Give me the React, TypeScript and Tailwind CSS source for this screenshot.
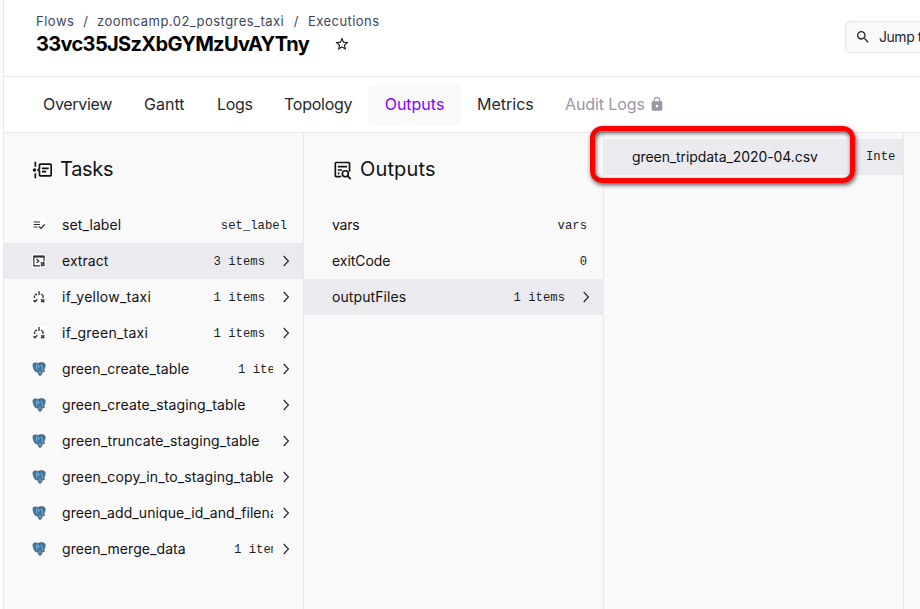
import React from "react";
import { MdLock, MdStarOutline, MdSearch } from "react-icons/md";

function TimelineIcon() {
  return (
    <svg viewBox="0 0 24 24" className="size-5 shrink-0" fill="currentColor">
      <path d="M5 2V8H3V2H5M3 22H5V16H3V22M5 12C5 13.11 4.11 14 3 14S1 13.11 1 12 1.9 10 3 10 5 10.9 5 12M24 6V18C24 19.11 23.11 20 22 20H10C8.9 20 8 19.11 8 18V14L6 12L8 10V6C8 4.89 8.9 4 10 4H22C23.11 4 24 4.89 24 6M22 6H10V10.83L8.83 12L10 13.17V18H22V6M12 9H20V11H12V9M12 13H17V15H12V13Z" />
    </svg>
  );
}

function TextSearchIcon() {
  return (
    <svg viewBox="0 0 24 24" className="size-5 shrink-0" fill="none" stroke="currentColor" strokeWidth="2">
      <path d="M11 20H5a1 1 0 0 1-1-1V4a1 1 0 0 1 1-1h15a1 1 0 0 1 1 1v10M7 8h11M7 12h5M7 16h2" />
      <circle cx="16" cy="16.5" r="3.6" />
      <path d="M18.5 19l4 4" />
    </svg>
  );
}

function Chevron() {
  return (
    <svg viewBox="0 0 14 14" className="size-3.5 shrink-0" fill="none" stroke="#26282d" strokeWidth="1.2">
      <path d="M4.700 2l4.700 5-4.700 5" />
    </svg>
  );
}

type Kind = "label" | "script" | "branch" | "postgres";

function TaskIcon({ kind }: { kind: Kind }) {
  return (
    <svg viewBox="0 0 14 14" className="size-3.5 shrink-0 bg-white" fill="none" stroke="#2b2c37" strokeWidth="1.2">
      {kind === "label" && (
        <path d="M1.500 4h6.500M1.500 6.500h6.500M1.500 9h4M7 8.500l2 2 3.700-4" />
      )}
      {kind === "script" && (
        <>
          <path d="M8 11.900H1.800V2.200H12V7" />
          <path d="M1.500 2.700H12.300" strokeWidth="1.800" />
          <path d="M4.500 5l2.300 2-2.300 2" />
          <path d="M8.700 9h4M8.700 11.200h4M9.800 8v4.600M11.800 7.500v4.500" />
        </>
      )}
      {kind === "branch" && (
        <>
          <path d="M7 1v4M2.500 8V5.600M3 4.500h2M9 4.500h1.500M11 5v3" strokeWidth="1.3" />
          <path d="M1.500 10.300l1.400 1.500 2.400-2.500M9.200 9.200l3.100 3.100M12.300 9.200L9.200 12.300" strokeWidth="1.400" />
        </>
      )}
      {kind === "postgres" && (
        <>
          <path
            d="M.8 3Q1 .6 3.500 .8L5.500 1.300 9 .6Q13.300 .3 13.300 3.500Q13 6.500 11.600 8.400L13 9Q12 10 10.200 10Q10 13.400 8 13.400Q6 13.400 5.900 10L3.500 9.800Q1 7 .8 3Z"
            fill="#3a76a3"
            stroke="#5a6670"
            strokeWidth=".7"
          />
          <path d="M5 2.200Q4.200 5 5 8.200M8.900 2.500Q11 5 10.300 8.800" stroke="#a9c3d6" strokeWidth=".7" />
          <path d="M5.500 3.800h1.400v2M8 8.500v3.500" stroke="#d5e2ec" strokeWidth=".6" />
        </>
      )}
    </svg>
  );
}

type Row = { name: string; value?: string; kind?: Kind; active?: boolean; arrow?: boolean; track: string; valueClass?: string };

const tasks: Row[] = [
  { name: "set_label", value: "set_label", kind: "label", track: "tracking-[0.1px]" },
  { name: "extract", value: "3 items", kind: "script", active: true, arrow: true, track: "tracking-[0.05px]" },
  { name: "if_yellow_taxi", value: "1 items", kind: "branch", arrow: true, track: "tracking-[0.24px]" },
  { name: "if_green_taxi", value: "1 items", kind: "branch", arrow: true, track: "tracking-[0.24px]" },
  { name: "green_create_table", value: "1 items", kind: "postgres", arrow: true, track: "tracking-[0.1px]", valueClass: "w-[35px]" },
  { name: "green_create_staging_table", kind: "postgres", arrow: true, track: "tracking-[0.11px]" },
  { name: "green_truncate_staging_table", kind: "postgres", arrow: true, track: "tracking-[0.14px]" },
  { name: "green_copy_in_to_staging_table", kind: "postgres", arrow: true, track: "tracking-[0.12px]" },
  { name: "green_add_unique_id_and_filename", kind: "postgres", arrow: true, track: "tracking-[0.08px]" },
  { name: "green_merge_data", value: "1 items", kind: "postgres", arrow: true, track: "tracking-[0.07px]", valueClass: "w-[39px]" },
];

const outputs: Row[] = [
  { name: "vars", value: "vars", track: "tracking-[-0.2px]" },
  { name: "exitCode", value: "0", track: "tracking-[-0.05px]" },
  { name: "outputFiles", value: "1 items", active: true, arrow: true, track: "tracking-[0.08px]" },
];

function ListRow({ row }: { row: Row }) {
  return (
    <div className={`flex h-9 items-center pl-7 ${row.arrow ? "pr-2.5" : "pr-4"} ${row.active ? "bg-[#ebebef]" : ""}`}>
      {row.kind && (
        <span className="mr-4 flex">
          <TaskIcon kind={row.kind} />
        </span>
      )}
      <div className="flex min-w-0 flex-1 items-center overflow-hidden">
        <span className={`whitespace-nowrap text-[14px] leading-5 text-[#111113] ${row.track}`}>{row.name}</span>
        {row.value && (
          <span
            className={`ml-auto shrink-0 overflow-hidden pt-0.5 font-['Liberation_Mono',monospace] text-[12.25px] leading-5 whitespace-pre text-[#1c1e22] ${row.valueClass ?? (row.arrow ? "mr-2" : "")}`}
          >
            {row.value}
          </span>
        )}
      </div>
      {row.arrow && (
        <span className="ml-1.5 flex">
          <Chevron />
        </span>
      )}
    </div>
  );
}

function Column({ icon, title, titleClass, rows }: { icon: React.ReactNode; title: string; titleClass: string; rows: Row[] }) {
  return (
    <section className="w-[300px] shrink-0 border-r border-[#e7e7ec]">
      <h2 className="flex h-[74px] items-center gap-2 pb-px pl-7 text-[#111113]">
        {icon}
        <span className={`pb-px text-[20px] leading-7 ${titleClass}`}>{title}</span>
      </h2>
      {rows.map((r) => (
        <ListRow key={r.name} row={r} />
      ))}
    </section>
  );
}

export default function App() {
  return (
    <div className="flex h-[609px] w-[920px] overflow-hidden bg-white pl-[3px] font-['Inter',sans-serif]">
      <div className="relative flex min-w-0 flex-1 flex-col border-l border-[#e9e9ec]">
        <header className="flex h-[77px] shrink-0 justify-between border-b border-[#e9e9ec] pl-8">
          <div className="pt-3">
            <nav className="flex h-5 items-center text-[13px] whitespace-pre text-[#404559]">
              <span className="w-[38px] tracking-[0.5px]">Flows</span>
              <span className="w-[23px] text-center">/</span>
              <span className="w-[187px] tracking-[0.46px]">zoomcamp.02_postgres_taxi</span>
              <span className="w-[24px] text-center">/</span>
              <span className="tracking-[0.45px]">Executions</span>
            </nav>
            <div className="-mt-px flex h-[26px] items-center">
              <h1 className="w-[274px] text-[20px] font-bold tracking-[-0.65px] whitespace-nowrap text-black">33vc35JSzXbGYMzUvAYTny</h1>
              <MdStarOutline className="ml-6 size-4 text-[#111113]" />
            </div>
          </div>
          <div className="mt-[21px] -mr-20 flex h-8 w-[155px] shrink-0 items-center rounded border border-[#e5e5e9] bg-[#f9f9fa] pb-px pl-[9px] text-[#26282d]">
            <MdSearch className="size-4 shrink-0" />
            <span className="ml-[8px] text-[14px] tracking-[-0.45px] whitespace-nowrap">Jump to...</span>
          </div>
        </header>

        <div className="flex h-14 shrink-0 items-center border-b border-[#e7e7ee] pl-[39px] text-[16px] whitespace-nowrap text-[#26282d]">
          <span className="w-[101px] pb-0.5 tracking-[-0.3px]">Overview</span>
          <span className="w-[73px] pb-0.5">Gantt</span>
          <span className="w-[67px] pb-0.5 tracking-[-0.3px]">Logs</span>
          <span className="w-[84px] pb-0.5 tracking-[-0.25px]">Topology</span>
          <span className="flex h-10 w-[93px] items-center justify-center rounded bg-[#f9f9fa] pb-0.5 text-[#8405ff]">Outputs</span>
          <span className="ml-4 w-[88px] pb-0.5">Metrics</span>
          <span className="w-[84px] pb-0.5 tracking-[-0.1px] text-[#9797a6]">Audit Logs</span>
          <MdLock className="mb-0.5 size-4 text-[#9797a6]" />
        </div>

        <main className="flex flex-1 bg-[#f9f9fa]">
          <Column icon={<TimelineIcon />} title="Tasks" titleClass="tracking-[-0.3px]" rows={tasks} />
          <Column icon={<TextSearchIcon />} title="Outputs" titleClass="tracking-[0.15px]" rows={outputs} />
          <section className="w-[300px] shrink-0 border-r border-[#e7e7ec] pt-1.5">
            <div className="flex h-9 items-center bg-[#ebebef] pl-7">
              <span className="w-[234px] pb-px text-[14px] tracking-[-0.08px] text-[#111113]">green_tripdata_2020-04.csv</span>
              <span className="pt-px font-['Liberation_Mono',monospace] text-[12.25px] text-[#1c1e22]">Inte</span>
            </div>
          </section>
        </main>

        <div className="absolute top-[126px] left-[586px] h-[57px] w-[265px] rounded-[12px] border-[5px] border-[#ff0000] shadow-[1px_2px_4px_rgba(0,0,0,0.65),inset_1px_2px_4px_rgba(0,0,0,0.65)]" />
      </div>
    </div>
  );
}
